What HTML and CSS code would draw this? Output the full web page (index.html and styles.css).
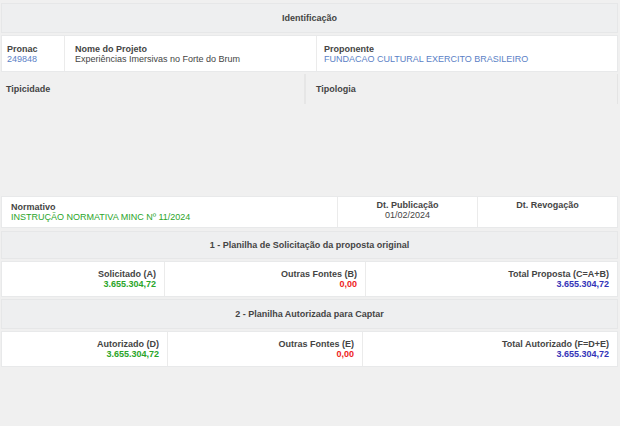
FILE: index.html
```html
<!DOCTYPE html>
<html lang="pt-BR">

<head>
    <meta charset="UTF-8">
    <meta name="viewport" content="width=device-width, initial-scale=1.0">
    <title>Identificação do Projeto</title>
    <link rel="stylesheet" href="styles.css">
</head>

<body>
    <div class="page">
        <div class="title-row">Identificação</div>

        <div class="row white">
            <div class="cell pronac">
                <b>Pronac</b>
                <span class="blue">249848</span>
            </div>
            <div class="cell projeto">
                <b>Nome do Projeto</b>
                <span>Experiências Imersivas no Forte do Brum</span>
            </div>
            <div class="cell proponente">
                <b>Proponente</b>
                <span class="blue">FUNDACAO CULTURAL EXERCITO BRASILEIRO</span>
            </div>
        </div>

        <div class="row grey tipo-row">
            <div class="cell tipicidade"><b>Tipicidade</b></div>
            <div class="cell tipologia"><b>Tipologia</b></div>
        </div>

        <div class="spacer"></div>

        <div class="row white normativo-row">
            <div class="cell normativo">
                <b>Normativo</b>
                <span class="green">INSTRUÇÃO NORMATIVA MINC Nº 11/2024</span>
            </div>
            <div class="cell center dt-pub">
                <b>Dt. Publicação</b>
                <span>01/02/2024</span>
            </div>
            <div class="cell center dt-rev">
                <b>Dt. Revogação</b>
            </div>
        </div>

        <div class="title-row sub">1 - Planilha de Solicitação da proposta original</div>

        <div class="row white money-row">
            <div class="cell right sol-a">
                <b>Solicitado (A)</b>
                <strong class="green">3.655.304,72</strong>
            </div>
            <div class="cell right sol-b">
                <b>Outras Fontes (B)</b>
                <strong class="red">0,00</strong>
            </div>
            <div class="cell right sol-c">
                <b>Total Proposta (C=A+B)</b>
                <strong class="indigo">3.655.304,72</strong>
            </div>
        </div>

        <div class="title-row sub second">2 - Planilha Autorizada para Captar</div>

        <div class="row white money-row">
            <div class="cell right aut-d">
                <b>Autorizado (D)</b>
                <strong class="green">3.655.304,72</strong>
            </div>
            <div class="cell right aut-e">
                <b>Outras Fontes (E)</b>
                <strong class="red">0,00</strong>
            </div>
            <div class="cell right aut-f">
                <b>Total Autorizado (F=D+E)</b>
                <strong class="indigo">3.655.304,72</strong>
            </div>
        </div>
    </div>
</body>

</html>
```

FILE: styles.css
```css
* {
    box-sizing: border-box;
}

body {
    font-family: "Liberation Sans", Arial, sans-serif;
    font-size: 9px;
    color: #444;
    margin: 0;
    padding: 0;
    background-color: #f0f0f0;
}

.page {
    width: 618px;
    padding-top: 3px;
}

/* section titles */
.title-row {
    background-color: #eeeff0;
    border: 1px solid #e6e7e8;
    height: 30px;
    line-height: 28px;
    text-align: center;
    font-weight: bold;
    margin-left: 1px;
}

.title-row.sub {
    margin-top: 3px;
    height: 28px;
    line-height: 26px;
}

.title-row.second {
    margin-top: 2px;
    height: 30px;
    line-height: 28px;
}

/* data rows */
.row {
    display: flex;
    margin-top: 2px;
    margin-left: 1px;
}

.row.white {
    background-color: #fff;
    border: 1px solid #e8e9ea;
}

.cell {
    display: flex;
    flex-direction: column;
    justify-content: center;
    border-right: 1px solid #ebebeb;
    padding: 0 5px;
    line-height: 10px;
}

.cell:last-child {
    border-right: none;
}

.cell b {
    color: #444;
}

.cell.center {
    align-items: center;
    justify-content: flex-start;
    padding-top: 3px;
}

.cell.right {
    align-items: flex-end;
    padding-right: 8px;
}

.blue {
    color: #5b7fc6;
}

.green {
    color: #2aa52a;
}

.red {
    color: #ee1c1c;
}

.indigo {
    color: #3434b8;
}

/* identification */
.row.white .cell {
    height: 35px;
}

.pronac {
    width: 63px;
}

.projeto {
    width: 252px;
    padding-left: 10px;
}

.proponente {
    flex: 1;
    padding-left: 7px;
}

.tipo-row {
    height: 30px;
    border-right: 1px solid #e4e4e4;
}

.tipo-row .cell {
    justify-content: center;
}

.tipicidade {
    width: 305px;
    border-right: 2px solid #e6e6e6;
}

.tipologia {
    flex: 1;
    padding-left: 10px;
}

.spacer {
    height: 90px;
}

/* normativo */
.normativo-row .cell {
    height: 30px !important;
}

.normativo {
    width: 336px;
    padding-left: 9px;
}

.dt-pub {
    width: 140px;
}

.dt-rev {
    flex: 1;
}

/* money rows */
.money-row .cell {
    height: 34px !important;
}

.sol-a {
    width: 163px;
}

.sol-b {
    width: 201px;
}

.sol-c {
    flex: 1;
}

.aut-d {
    width: 166px;
}

.aut-e {
    width: 195px;
}

.aut-f {
    flex: 1;
}
```
